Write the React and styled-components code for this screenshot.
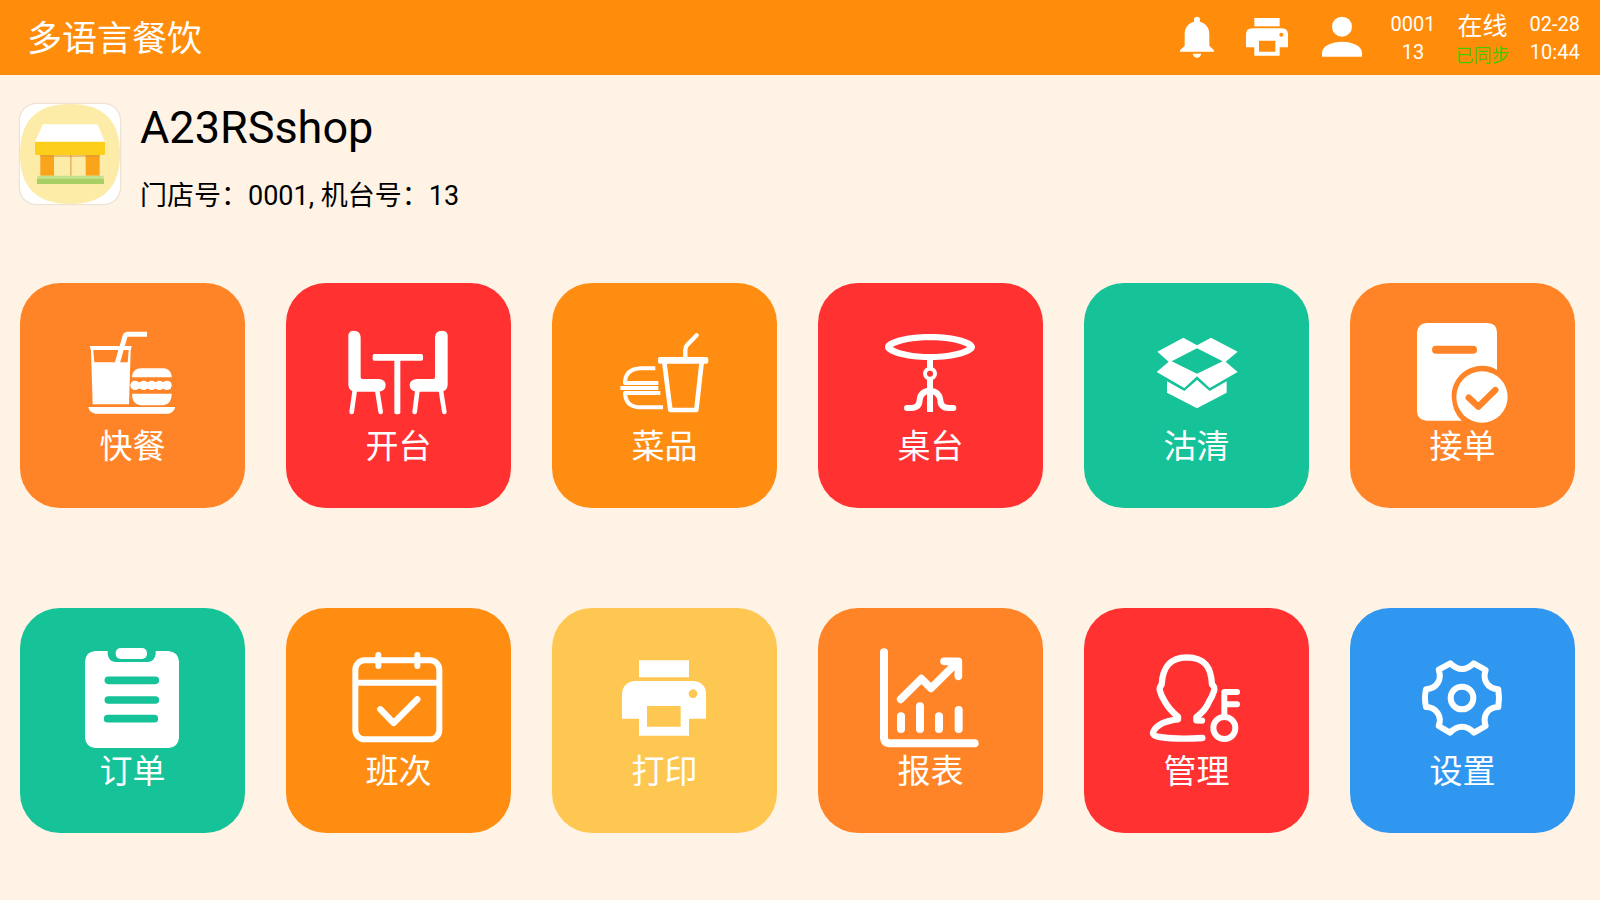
import React from "react";
import styled, { createGlobalStyle } from "styled-components";

const GlobalStyle = createGlobalStyle`
  *, *::before, *::after { box-sizing: border-box; }
  body {
    margin: 0;
    background: #fff3e5;
    color: #000;
    font-family: Roboto, "Noto Sans CJK SC", sans-serif;
  }
`;

const Page = styled.div`
  min-height: 100vh;
`;

const Header = styled.header`
  display: flex;
  align-items: center;
  justify-content: space-between;
  min-height: 75px;
  padding: 0 20px 0 27px;
  background: #ff8c0a;
  color: #fff;
`;

const Title = styled.h1`
  margin: 0;
  padding-top: 4px;
  font-size: 35px;
  line-height: 50px;
  font-weight: 400;
`;

const Status = styled.div`
  display: flex;
  align-items: center;
  gap: 20px;
`;

const Actions = styled.div`
  display: flex;
  align-items: center;
  gap: 25px;
  margin-right: 4px;
`;

const IconButton = styled.button`
  display: flex;
  justify-content: center;
  width: ${(p) => (p.$narrow ? "40px" : "50px")};
  padding: 0;
  border: 0;
  background: none;
  color: inherit;
  cursor: pointer;

  svg {
    flex: none;
    width: 50px;
    height: 50px;
  }
`;

const StatusColumn = styled.div`
  display: flex;
  flex-direction: column;
  align-items: center;
  font-size: 20px;
  line-height: 28px;
`;

const SyncColumn = styled(StatusColumn)`
  padding-top: 6px;
`;

const Online = styled.span`
  font-size: 25px;
  line-height: 30px;
`;

const Synced = styled.span`
  font-size: 18px;
  line-height: 28px;
  color: #46c800;
`;

const Shop = styled.section`
  display: flex;
  align-items: flex-start;
  gap: 20px;
  padding: 27px 20px 0;
`;

const ShopLogo = styled.svg`
  flex: none;
  width: 100px;
  height: 100px;
  margin-top: 2px;
  border-radius: 16px;
  background: #fff;
  box-shadow: 0 0 2px rgba(0, 0, 0, 0.25);
`;

const ShopName = styled.h2`
  margin: 0;
  font-size: 45px;
  line-height: 52px;
  font-weight: 400;
`;

const ShopMeta = styled.p`
  margin: 26px 0 0;
  font-size: 27px;
  line-height: 32px;
`;

const Menu = styled.nav`
  display: grid;
  grid-template-columns: repeat(6, 225px);
  justify-content: space-between;
  row-gap: 100px;
  padding: 71px 25px 67px 20px;
`;

const Tile = styled.button`
  display: flex;
  flex-direction: column;
  align-items: center;
  height: 225px;
  padding: 40px 0 0;
  border: 0;
  border-radius: 40px;
  background: ${(p) => p.$color};
  color: #fff;
  font-family: inherit;
  font-size: 33px;
  line-height: 47px;
  cursor: pointer;

  svg {
    flex: none;
    width: 100px;
    height: 100px;
    overflow: visible;
  }
`;

const Icon = ({ x, y = 144, size = 300, children }) => (
  <svg viewBox={`${x} ${y} ${size} ${size}`} fill="currentColor" aria-hidden="true">
    {children}
  </svg>
);

const Line = ({ w = 18, cap = "round", ...rest }) => (
  <path
    fill="none"
    stroke="currentColor"
    strokeWidth={w}
    strokeLinecap={cap}
    strokeLinejoin="round"
    {...rest}
  />
);

const BellIcon = () => (
  <Icon x={36} y={40} size={150}>
    <path d="M60 156v-4l14-14v-34c0-20 10-33 28-38v-6a9 9 0 0 1 18 0v6c18 5 28 18 28 38v34l14 14v4zM98 162h26c-2 8-7 12-13 12s-11-4-13-12z" />
  </Icon>
);

const HeaderPrinterIcon = () => (
  <Icon x={246} y={40} size={150}>
    <path d="M283 55h76v25h-76z" />
    <path
      fillRule="evenodd"
      d="M277 86h88q19 0 19 19v38h-25v25h-76v-25h-25v-38q0-19 19-19zM297 123v33h49v-33zM364 99a6 6 0 1 0 0.100 0z"
    />
  </Icon>
);

const PersonIcon = () => (
  <Icon x={471} y={40} size={150}>
    <circle cx="546" cy="81" r="30" />
    <path d="M486 171v-12c0-20 30-33 60-33s60 13 60 33v12z" />
  </Icon>
);

const FastFoodIcon = () => (
  <Icon x={219}>
    <path fillRule="evenodd" d="M239 213h126l-3 14-5 161H248L243 227zM250 225l3 37h64l8-37zM337 225l-9 37h25l3-37z" />
    <Line w={15} cap="butt" d="M322 264L345 184Q347 178 353 178H411" />
    <path d="M366 307v-3q2-23 28-24h66q22 1 25 24v3z" />
    <rect x="366" y="321" width="116" height="20" />
    {[375, 401, 425, 448, 471].map((cx) => (
      <circle key={cx} cx={cx} cy="331" r="14" />
    ))}
    <path d="M366 356h119q1 30-25 35H391q-26-5-25-35z" />
    <path d="M235 396H496q-4 16-20 20H256q-18-3-21-20z" />
  </Icon>
);

const DineInIcon = () => (
  <Icon x={207}>
    <path d="M205 180q2-13 17-13 18 0 20 19V307q0 5 6 5h50q19 2 19 19-1 18-20 19H224q-17-1-19-19z" />
    <Line w={14} d="M224 348L215 411M292 348L302 411" />
    <path d="M503 180q-2-13-18-13-18 0-20 19V307q0 5-6 5h-50q-20 2-20 19 1 18 20 19H484q17-1 19-19z" />
    <Line w={14} d="M412 348L404 411M483 348L493 411" />
    <rect x="278" y="237" width="151" height="20" rx="5" />
    <rect x="343" y="250" width="18" height="168" rx="6" />
  </Icon>
);

const DishIcon = () => (
  <Icon x={210}>
    <Line w={13} d="M421 252V224Q421 215 427 209L455 181" />
    <rect x="339" y="246" width="151" height="20" rx="6" />
    <Line w={14} d="M358 262L376 405H454L470 262" />
    <Line w={12} cap="butt" d="M331 280H288Q240 282 240 324H340" />
    <Line w={12} cap="butt" d="M226 339H340" />
    <Line w={12} cap="butt" d="M346 354H240Q242 396 285 397H354" />
  </Icon>
);

const TableIcon = () => (
  <Icon x={213}>
    <path
      fillRule="evenodd"
      d="M360 177c76 0 135 17 135 39s-59 39-135 39-135-17-135-39 59-39 135-39zM360 196c-50 0-90 8-112 20 22 13 62 21 112 21s90-8 112-21c-22-12-62-20-112-20z"
    />
    <rect x="351" y="250" width="18" height="30" />
    <circle cx="360" cy="296" r="15" fill="none" stroke="currentColor" strokeWidth="12" />
    <rect x="351" y="312" width="18" height="99" />
    <Line w={18} d="M360 347Q331 349 329 375 328 399 303 399H291M360 347Q388 349 391 375 391 398 416 399H430" />
  </Icon>
);

const SoldOutIcon = () => (
  <Icon x={216}>
    <path d="M325 188L366 211 408 188 488 230 452 260 488 291 404 339 366 304 328 339 245 291 281 260 247 230zM366 220L290 259 366 296 443 259z" fillRule="evenodd" />
    <path d="M276 319L328 348 366 315 404 348 455 319V353L366 400 276 353z" />
  </Icon>
);

const AcceptIcon = () => (
  <Icon x={219}>
    <path d="M260 144H442Q471 145 471 172V285Q447 270 418 273C375 276 335 312 335 365Q337 411 365 437H260Q231 435 231 408V172Q233 146 260 144z" />
    <circle cx="426" cy="366" r="77" />
    <g color="#ff8427">
      <Line w={24} d="M288 224H399" />
      <Line w={19} d="M386 368L415 395 466 345" />
    </g>
  </Icon>
);

const OrderIcon = () => (
  <Icon x={219}>
    <rect x="317" y="144" width="94" height="33" rx="15" />
    <path d="M255 153H293V163Q296 185 316 186H414Q434 184 437 163V153H475Q504 155 507 184V414Q504 441 477 444H255Q228 441 225 414V184Q228 155 255 153z" />
    <g color="#16c298">
      <Line w={23} d="M295 241H436M295 300H436M293 356H433" />
    </g>
  </Icon>
);

const ShiftIcon = () => (
  <Icon x={1017}>
    <rect x="1036" y="181" width="252" height="237" rx="28" fill="none" stroke="currentColor" strokeWidth="18" />
    <Line w={18} d="M1105 165V198M1222 165V198" />
    <Line w={18} cap="butt" d="M1036 248H1288" />
    <Line w={19} d="M1111 328L1151 369 1222 298" />
  </Icon>
);

const PrintIcon = () => (
  <Icon x={210}>
    <path d="M282 181h150v51H282z" />
    <path
      fillRule="evenodd"
      d="M269 243H445q38 4 38 39v74H432v51H282V356H231V282q2-35 38-39zM306 318v62H407V318zM444 268a13 13 0 1 0 0.100 0z"
    />
  </Icon>
);

const ReportIcon = () => (
  <Icon x={1008}>
    <Line w={24} d="M1017 157V414Q1018 429 1033 430H1289" />
    <Line w={23} d="M1067 298L1129 236 1158 265 1238 185M1197 184H1240V229" />
    <Line w={24} d="M1068 349V387M1125 319V387M1182 349V387M1241 330V387" />
  </Icon>
);

const AdminIcon = () => (
  <Icon x={216}>
    <Line
      w={19}
      d="M382 414Q305 419 255 411 228 408 236 393 250 365 309 358V350C288 333 277 319 268 302Q258 286 254 270 253 261 260 254C263 201 285 173 335 172 390 173 408 201 411 253Q419 260 418 270 412 290 403 303C395 323 380 340 364 351V361L381 362"
    />
    <circle cx="448" cy="384" r="33" fill="none" stroke="currentColor" strokeWidth="18" />
    <Line w={18} d="M448 350V276H486M448 313H486" />
  </Icon>
);

const SettingsIcon = () => (
  <Icon x={1014}>
    <Line
      w={18}
      d="M1126 190Q1143 207 1161 207T1196 190L1232 210C1222 238 1236 266 1270 268Q1274 294 1270 321C1237 322 1222 348 1232 378L1197 398Q1180 380 1161 380T1125 398L1091 378C1102 350 1085 322 1053 321Q1047 294 1053 268C1085 265 1102 240 1091 209z"
    />
    <circle cx="1161" cy="294" r="34" fill="none" stroke="currentColor" strokeWidth="18" />
  </Icon>
);

const ITEMS = [
  { label: "快餐", color: "#ff8427", Glyph: FastFoodIcon },
  { label: "开台", color: "#ff3131", Glyph: DineInIcon },
  { label: "菜品", color: "#ff8d11", Glyph: DishIcon },
  { label: "桌台", color: "#ff3131", Glyph: TableIcon },
  { label: "沽清", color: "#16c298", Glyph: SoldOutIcon },
  { label: "接单", color: "#ff8427", Glyph: AcceptIcon },
  { label: "订单", color: "#16c298", Glyph: OrderIcon },
  { label: "班次", color: "#ff8d11", Glyph: ShiftIcon },
  { label: "打印", color: "#fec751", Glyph: PrintIcon },
  { label: "报表", color: "#ff8427", Glyph: ReportIcon },
  { label: "管理", color: "#ff3131", Glyph: AdminIcon },
  { label: "设置", color: "#3097f1", Glyph: SettingsIcon },
];

export default function App() {
  return (
    <Page>
      <GlobalStyle />
      <Header>
        <Title>多语言餐饮</Title>
        <Status>
          <Actions>
            <IconButton $narrow aria-label="通知"><BellIcon /></IconButton>
            <IconButton aria-label="打印机"><HeaderPrinterIcon /></IconButton>
            <IconButton aria-label="用户"><PersonIcon /></IconButton>
          </Actions>
          <StatusColumn>
            <span>0001</span>
            <span>13</span>
          </StatusColumn>
          <SyncColumn>
            <Online>在线</Online>
            <Synced>已同步</Synced>
          </SyncColumn>
          <StatusColumn>
            <span>02-28</span>
            <span>10:44</span>
          </StatusColumn>
        </Status>
      </Header>
      <main>
        <Shop>
          <ShopLogo viewBox="0 0 300 300" aria-hidden="true">
            <path fill="#fdeba8" d="M150 0C255 0 300 55 300 150S255 300 150 300 0 245 0 150 45 0 150 0z" />
            <path fill="#fff" d="M72 61H228Q233 61 235 66L255 114H45L66 66Q68 61 72 61z" />
            <path fill="#fccf1c" d="M45 113H255V149Q255 153 251 153H49Q45 153 45 149z" />
            <path fill="#fdeba8" d="M102 153H197V215H102z" />
            <path fill="#f9a41b" d="M61 153H102V215H61zM197 153H239V215H197z" />
            <path fill="#e9b96a" d="M150 153H155V215H150z" />
            <path fill="#d9963a" opacity=".5" d="M61 153H239V159H61z" />
            <path fill="#c2e08c" d="M53 215H251V226H51z" />
            <path fill="#a8cf63" d="M51 225H252V240H51z" />
          </ShopLogo>
          <div>
            <ShopName>A23RSshop</ShopName>
            <ShopMeta>门店号：0001, 机台号：13</ShopMeta>
          </div>
        </Shop>
        <Menu>
          {ITEMS.map(({ label, color, Glyph }) => (
            <Tile key={label} $color={color}>
              <Glyph />
              {label}
            </Tile>
          ))}
        </Menu>
      </main>
    </Page>
  );
}
